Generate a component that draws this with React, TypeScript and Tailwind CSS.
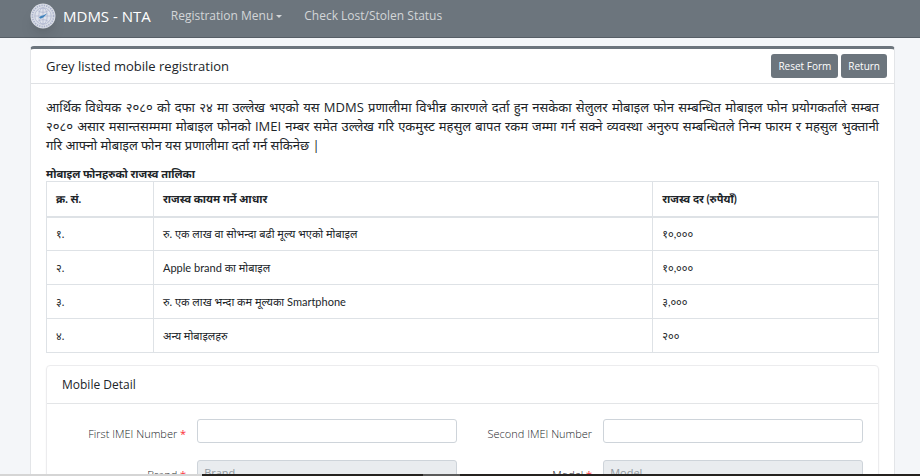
import React from "react";

const rates = [
    {no: '१.', basis: 'रु. एक लाख वा सोभन्दा बढी मूल्य भएको मोबाइल', rate: '१०,०००'},
    {no: '२.', basis: 'Apple brand का मोबाइल', rate: '१०,०००'},
    {no: '३.', basis: 'रु. एक लाख भन्दा कम मूल्यका Smartphone', rate: '३,०००'},
    {no: '४.', basis: 'अन्य मोबाइलहरु', rate: '२००'},
];

const Logo = () => {
    return (
        <svg viewBox="0 0 26 26" className="h-[26px] w-[26px] rounded-full shadow-lg" aria-hidden="true">
            <circle cx="13" cy="13" r="12.5" fill="#d9dde6" />
            <circle cx="13" cy="13" r="10.6" fill="none" stroke="#a9b1cb" strokeWidth="1.6" strokeDasharray="1.3 1.1" />
            <circle cx="13" cy="13" r="8.2" fill="#dfe3ec" stroke="#a7b0ca" strokeWidth="0.7" />
            <path d="M13 4.8v16.4M4.8 13h16.4M7.5 7.5c3 2.4 8 2.4 11 0M7.5 18.5c3-2.4 8-2.4 11 0" fill="none" stroke="#b0b8d0" strokeWidth="0.8" />
            <ellipse cx="13" cy="13" rx="4.2" ry="8.2" fill="none" stroke="#b0b8d0" strokeWidth="0.8" />
            <path d="M9 14.2l1.6 1.5 3-1.4 3.8-4-4.4 2.3-1.6.2z" fill="#3f83bd" />
        </svg>
    );
};

const Navbar = () => {
    return (
        <nav className="flex h-[38px] items-center border-b border-[#565e66] bg-[#6c757d] px-[30px] pb-[5px]">
            <a href="#" className="flex items-center gap-[7px] text-[15px] text-white">
                <Logo />
                MDMS - NTA
            </a>
            <button type="button" className="ml-5 flex items-center gap-[3px] text-xs text-[#d3d6d8]">
                Registration Menu
                <span className="border-x-[3px] border-t-[3px] border-x-transparent" />
            </button>
            <a href="#" className="ml-[22px] text-xs text-[#d3d6d8]">Check Lost/Stolen Status</a>
        </nav>
    );
};

const RateTable = () => {
    return (
        <table className="w-full table-fixed border-collapse border border-[#dee2e6] text-left font-[Lato,'Noto_Sans_Devanagari',sans-serif] text-[11px] leading-[14px]">
            <caption className="caption-top text-left text-[11px] font-bold leading-[14px]">
                मोबाइल फोनहरुको राजस्व तालिका
            </caption>
            <thead>
                <tr className="h-[35px] border-b-2 border-[#dee2e6]">
                    <th className="w-[107px] border-r border-[#dee2e6] px-[9px]">क्र. सं.</th>
                    <th className="w-[60%] border-r border-[#dee2e6] px-[9px]">राजस्व कायम गर्ने आधार</th>
                    <th className="px-[9px]">राजस्व दर (रुपैयाँ)</th>
                </tr>
            </thead>
            <tbody>
                {rates.map((row) => (
                    <tr key={row.no} className="h-[34px] border-b border-[#dee2e6]">
                        <td className="border-r border-[#dee2e6] px-[9px]">{row.no}</td>
                        <td className="border-r border-[#dee2e6] px-[9px]">{row.basis}</td>
                        <td className="px-[9px]">{row.rate}</td>
                    </tr>
                ))}
            </tbody>
        </table>
    );
};

type FieldProps = {
    id: string;
    label: string;
    required?: boolean;
    disabled?: boolean;
    placeholder?: string;
};

const Field = ({id, label, required, disabled, placeholder}: FieldProps) => {
    return (
        <div className="flex">
            <label htmlFor={id} className="w-[36%] pr-[11px] pt-[7px] text-right text-[11px] font-light leading-4">
                {label}
                {required && <span className="font-normal text-red-500"> *</span>}
            </label>
            <input
                id={id}
                type="text"
                disabled={disabled}
                placeholder={placeholder}
                className="h-6 min-w-0 flex-1 rounded-[3px] border border-[#ced4da] bg-white px-1.5 text-[11px] placeholder:text-[#939ba2] disabled:bg-[#e9ecef]"
            />
        </div>
    );
};

const MobileDetail = () => {
    return (
        <section className="mt-3 rounded border border-[#ececee] shadow-xs">
            <h2 className="border-b border-[#e3e5e7] px-[15px] py-2.5 text-xs leading-[17px]">Mobile Detail</h2>
            <div className="grid grid-cols-2 gap-y-[17px] py-[15px] pl-1 pr-[15px]">
                <Field id="first-imei" label="First IMEI Number" required />
                <Field id="second-imei" label="Second IMEI Number" />
                <Field id="brand" label="Brand" required disabled placeholder="Brand" />
                <Field id="model" label="Model" required disabled placeholder="Model" />
            </div>
        </section>
    );
};

const App = () => {
    return (
        <div className="h-screen overflow-hidden bg-[#f4f6f9] font-['Open_Sans','Noto_Sans_Devanagari','Noto_Sans',sans-serif] text-[#212529]">
            <Navbar />
            <main className="ml-[30px] mr-[25px] mt-2 rounded border-x border-t-[3px] border-x-[#e3e5e8] border-t-[#6c757d] bg-white">
                <header className="flex h-[35px] items-center border-b border-[#dfe1e4] pl-[15px] pr-[7px]">
                    <h1 className="flex-1 pt-0.5 text-[13px]">Grey listed mobile registration</h1>
                    <div className="flex gap-[3px] text-[10px] text-white">
                        <button type="button" className="h-6 rounded-[3px] bg-[#6c757d] px-[7px]">Reset Form</button>
                        <button type="button" className="h-6 rounded-[3px] bg-[#6c757d] px-[7px]">Return</button>
                    </div>
                </header>
                <div className="px-[15px] pt-3.5">
                    <p className="mb-3 text-justify text-[13px] leading-[19px]">
                        आर्थिक विधेयक २०८० को दफा २४ मा उल्लेख भएको यस MDMS प्रणालीमा विभीन्न कारणले दर्ता हुन नसकेका सेलुलर मोबाइल फोन सम्बन्धित मोबाइल फोन प्रयोगकर्ताले सम्बत २०८० असार मसान्तसम्ममा मोबाइल फोनको IMEI नम्बर समेत उल्लेख गरि एकमुस्ट महसुल बापत रकम जम्मा गर्न सक्ने व्यवस्था अनुरुप सम्बन्धितले निन्म फारम र महसुल भुक्तानी गरि आफ्नो मोबाइल फोन यस प्रणालीमा दर्ता गर्न सकिनेछ |
                    </p>
                    <RateTable />
                    <MobileDetail />
                </div>
            </main>
            <div className="fixed inset-x-0 bottom-0 flex h-0.5">
                <div className="w-[22%] bg-[#d5d5d5]" />
                <div className="flex-1 bg-[#25221f]" />
                <div className="w-[4%] bg-[#5a5a5a]" />
                <div className="w-[50%] bg-[#25221f]" />
            </div>
        </div>
    );
};

export default App;
